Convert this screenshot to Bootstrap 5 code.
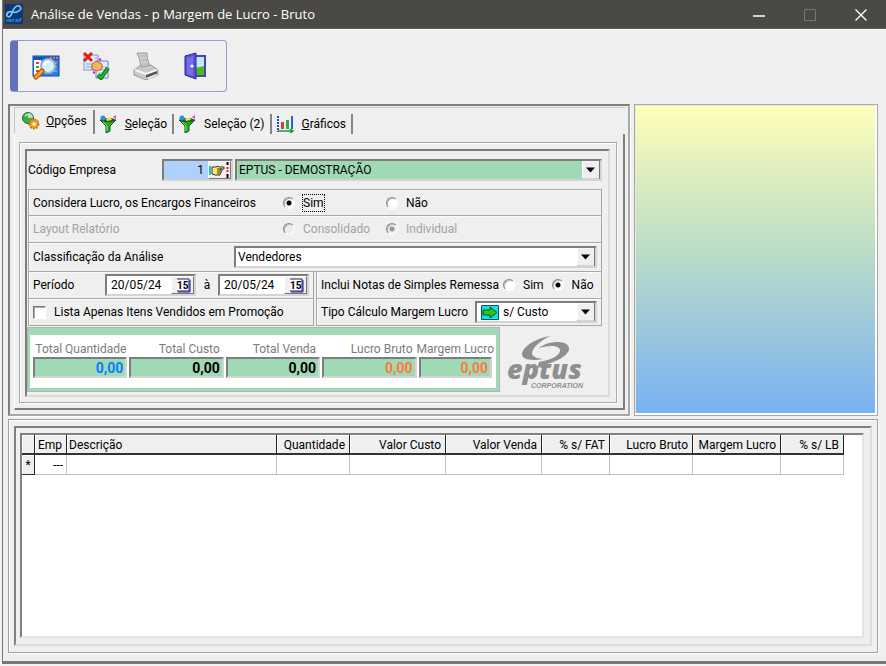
<!DOCTYPE html>
<html lang="pt-BR">
<head>
<meta charset="utf-8">
<meta name="viewport" content="width=device-width, initial-scale=1">
<title>Análise de Vendas - p Margem de Lucro - Bruto</title>
<link href="https://cdn.jsdelivr.net/npm/bootstrap@5.3.0/dist/css/bootstrap.min.css" rel="stylesheet">
<style>
:root{--face:#efefef;--dark:#7d7d7d;--mid:#a8a8a8;--green:#a0dab4}
body{background:#f2f2f2;font-family:Roboto,"Liberation Sans",sans-serif;font-size:12px;line-height:16px;color:#000}
button,input,select{font:inherit;color:inherit}
.win{margin-left:2px;background:var(--face);border-left:1px solid #777;border-bottom:3px solid #777;min-height:calc(100vh - 2px)}
.titlebar{background:#4b4946;color:#fff;height:29px;border-bottom:1px solid #5c5a58;font-family:"Open Sans",sans-serif;padding-left:2px}
.titlebar h1{font-size:13px;line-height:16px}
.winbtn{width:51px;height:28px;border:0;background:none;padding:0}
.toolwrap{padding:10px 0 12px 7px}
.toolbox{width:217px;height:52px;border:1px solid #8f9fd0;border-left:8px solid #6472b8;border-radius:4px;gap:22px;padding-left:14px}
.toolbox button{border:0;background:none;padding:0;width:28px;height:28px}
.content{padding:0 8px 8px 5px}
.toprow{display:grid;grid-template-columns:minmax(0,622fr) minmax(0,244fr);gap:4px}
.frame{border:2px solid;border-color:#7d7d7d #a8a8a8 #a8a8a8 #7d7d7d;box-shadow:1px 1px 0 #fff;padding:1px 3px 4px 4px}
.tabset{border:1px solid #c6c6c6;border-right:0;border-bottom:0;padding-top:2px;height:27px}
.tabbtn{border:0;border-right:2px solid #858585;background:none;height:20px;padding:0 5px 0 4px;gap:8px}
.tabbtn.current{height:24px;padding:0 6px 2px 7px;gap:6px}
.tabbody{border-left:1px solid #fff;border-right:2px solid var(--dark);border-bottom:2px solid var(--dark);padding:8px 6px 5px 4px}
.page{border:1px solid var(--mid);box-shadow:inset 1px 1px 0 #fff,1px 1px 0 #fff;padding:6px 6px 5px 5px}
.well{border:2px solid;border-color:var(--dark) #dcdcdc #dcdcdc var(--dark);padding:0 6px 4px 1px}
.sunk{border:2px solid;border-color:var(--dark) #d4d4d4 #d4d4d4 var(--dark);background:#fff}
.raised{border:1px solid;border-color:#fff #777 #777 #fff;background:var(--face);padding:0}
.sunk input,.sunk select{border:0;background:none;padding:0;min-width:0;outline:0}
.tinted{background:var(--green)}
.box{border:1px solid var(--mid);box-shadow:inset 1px 1px 0 #fafafa;padding:0 4px}
.r26{height:27px}.r28{height:29px}
.lab1{width:250px}.opt1{width:103px}
.lab-cls{width:201px}.lab-per{width:72px}.lab-rem{width:182px}.lab-tp{width:154px}
.lab1,.lab-cls,.lab-per,.lab-rem,.lab-tp{flex:none}
.split{gap:2px}
.off{color:#a3a3a3}
.rd{appearance:none;width:12px;height:12px;border-radius:50%;border:1px solid;border-color:#888 #fff #fff #888;background:#fff;margin:0;box-shadow:inset 1px 1px 0 #bbb;flex:none}
.rd:checked{background:radial-gradient(circle,#000 2px,#fff 3px)}
.rd:disabled{background:#eee}
.rd:disabled:checked{background:radial-gradient(circle,#999 2px,#eee 3px)}
.ck{appearance:none;width:13px;height:13px;border:1px solid;border-color:#777 #fff #fff #777;box-shadow:inset 1px 1px 0 #aaa;background:#fff;margin:0}
.focusbox{outline:1px dotted #000}
.sunk .dd{appearance:none;width:100%;height:100%;border-radius:0;background:url("data:image/svg+xml,%3Csvg xmlns='http://www.w3.org/2000/svg' width='18' height='19'%3E%3Crect width='18' height='19' fill='%23777'/%3E%3Crect width='17' height='18' fill='%23fff'/%3E%3Crect x='1' y='1' width='16' height='17' fill='%23efefef'/%3E%3Cpath d='M4 7h9l-4.500 5z'/%3E%3C/svg%3E") right center no-repeat}
.sunk .ps{padding-left:2px}
.h22{height:22px}
.emp{width:71px}.lab-emp{width:132px}
.emp-row{gap:2px}
.emp input{background:#afd0fa;width:43px;text-align:right}
.emp-row{padding:8px 0}
.datebox{width:91px;flex:none}
.datebox button{width:23px}
.sumrow{padding-top:2px}
.sums{border:3px solid var(--green);border-top-width:7px;border-left-width:2px;outline:1px solid #b4b4b4;background:#fff;width:471px;height:63px;color:#7c7c7c;padding:6px 4px 0 3px;gap:2px}
.sums>div{flex:1 1 95px;min-width:0}
.sums label{display:flex;justify-content:flex-end;white-space:nowrap;padding-right:4px}
.sums .first label{padding-right:1px}
.sums .sunk{background:var(--green);width:100%;height:21px;text-align:right;font-weight:700;font-size:14px;padding:0 2px 0 0;display:block;border-radius:0}
.sums .slim{flex-basis:74px}
.sums .slim label{justify-content:center;padding:0}
.blue{color:#0080ff}.orange{color:#ff7840}.black{color:#000}
.sky{background:linear-gradient(#ffffb8,#b9dbc7 48%,#79b2f4);border:1px solid #a8a8a8;box-shadow:inset -2px -2px 0 #fff,inset 1px 1px 0 #e8e8d8}
.lower{border:1px solid #a0a0a0;box-shadow:inset 1px 1px 0 #fff,1px 1px 0 #fff;padding:6px 5px 6px 5px;margin-top:3px}
.lower .midframe{border:2px solid;border-color:#808080 #dedede #dedede #808080;padding:5px 6px 6px 4px}
.gridbox{border:2px solid;border-color:#808080 #e4e4e4 #e4e4e4 #808080;background:#fff;overflow:hidden}
.grid{table-layout:fixed;width:822px;border-collapse:separate;border-spacing:0}
.grid th{font-weight:400;background:var(--face);height:20px;border-right:1px solid #222;border-bottom:2px solid #333;box-shadow:inset 1px 1px 0 #fff;padding:1px 4px 0 2px;white-space:nowrap;text-align:right}
.grid td{height:20px;border-right:1px solid #c0c0c0;border-bottom:1px solid #c0c0c0;padding:0 3px;text-align:right}
.grid tbody th{border-bottom:1px solid #333;padding:0;text-align:center}
</style>
<script src="https://cdn.jsdelivr.net/npm/bootstrap@5.3.0/dist/js/bootstrap.bundle.min.js"></script>
</head>
<body>
<main class="win d-flex flex-column">
<header class="titlebar d-flex align-items-center">
 <svg width="18" height="20" viewBox="0 0 18 20" aria-hidden="true"><rect width="18" height="20" fill="#0b3a73"/><path d="M2 12C1 8 5 7 8 8s5 0 7-2 0-5-3-4-4 4-5 7-3 5-5 3z" fill="none" stroke="#7cc4f5" stroke-width="1.700"/><path d="M2 15v3m2 0v-3l2 3v-3m2 0v3m0-3h1m2 0v3m0-3l2 3v-3m2 0v3m-1-3h3" stroke="#3d8fd6" fill="none"/></svg>
 <h1 class="m-0 ms-1 ps-1 fw-normal flex-grow-1">Análise de Vendas - p Margem de Lucro - Bruto</h1>
 <button class="winbtn" aria-label="Minimizar"><svg width="12" height="12"><path d="M0 7h12" stroke="#fff" stroke-width="1.5"/></svg></button>
 <button class="winbtn" aria-label="Maximizar" disabled><svg width="12" height="12"><path d="M.5.5h11v11H.5z" fill="none" stroke="#777"/></svg></button>
 <button class="winbtn" aria-label="Fechar"><svg width="12" height="12"><path d="M.5.5l11 11m0-11l-11 11" stroke="#fff" stroke-width="1.4"/></svg></button>
</header>
<div class="d-flex flex-column flex-grow-1 border-top border-white">
<div class="toolwrap"><div class="toolbox d-flex align-items-center" role="toolbar">
 <button aria-label="Pesquisar"><svg width="28" height="28" viewBox="0 0 28 28"><rect x="1" y="4" width="26" height="20" fill="#2a7fe0" stroke="#144a9c"/><path d="M1 5h26v3H1z" fill="#1455b8"/><path d="M18 6h2m1 0h2m1 0h2" stroke="#e66" stroke-width="2"/><path d="M2 8h7v16H2z" fill="#fff"/><path d="M4 11h3m-3 8h3" stroke="#e33" stroke-width="2"/><path d="M4 15h3" stroke="#2a4" stroke-width="2"/><path d="M17 11h8m-8 4h8m-8 4h8" stroke="#8fd0ff"/><circle cx="16" cy="14" r="7" fill="#d5f2fc" stroke="#9cb4c4" stroke-width="2"/><path d="M12 13c1-3 3-4 5-3" stroke="#fff" stroke-width="2" fill="none"/><path d="M10 19l-6 6" stroke="#a65008" stroke-width="5" stroke-linecap="round"/><path d="M10 19l-6 6" stroke="#ff9d2c" stroke-width="3" stroke-linecap="round"/></svg></button>
 <button aria-label="Selecionar"><svg width="28" height="28" viewBox="0 0 28 28"><path d="M2 3h14v15H2z" fill="#deecfa" stroke="#6f98cf"/><path d="M4 12h9m-9 3h9m0-9h2" stroke="#79a7dc"/><path d="M14 9h12v17H14z" fill="#e4effc" stroke="#5f83c8"/><path d="M16 15h8m-8 3h8m-8 3h8" stroke="#8ab3e4"/><path d="M10 12l4-3 6 3v5l-5 2-5-2z" fill="#f3b468" stroke="#b46c1c"/><path d="M17 7l2 1m-8 12l2 1" stroke="#f0f" stroke-width="2"/><path d="M2 1l8 8m0-8l-8 8" stroke="#e0200c" stroke-width="3"/><path d="M16 23l3 3 7-10" fill="none" stroke="#0b6c10" stroke-width="4"/><path d="M16 23l3 3 7-10" fill="none" stroke="#24b82e" stroke-width="2"/></svg></button>
 <button aria-label="Imprimir"><svg width="28" height="28" viewBox="0 0 28 28"><path d="M5 1h10c0 5 1 8 3 13l-9 2C8 10 8 7 5 1z" fill="#cfcfcf" stroke="#9a9a9a"/><path d="M8 4h6m-5 4h6m-5 4h6" stroke="#aaa"/><path d="M2 18l7-5 1 2 9-2 7 5v5l-12 5-12-5z" fill="#c9c9c9" stroke="#999"/><path d="M3 18l11 4 11-4" fill="none" stroke="#f6f6f6" stroke-width="2"/><path d="M14 23l11-4v3l-11 4z" fill="#555"/><path d="M14 26l10-4 2 1-9 4z" fill="#e8e8e8"/></svg></button>
 <button aria-label="Sair"><svg width="28" height="28" viewBox="0 0 28 28"><path d="M11 3h13v22H11z" fill="#4a42b8"/><path d="M13 5h9v18h-9z" fill="#bdeafc"/><path d="M13 16l9-2v9h-9z" fill="#4cba1c"/><path d="M3 4l11-3v26L3 23z" fill="#5b54d6" stroke="#2c2690"/><path d="M5 6l6-2v20l-6-2z" fill="#756ee8"/><circle cx="10" cy="14" r="1.5" fill="#fff"/></svg></button>
</div></div>
<div class="content d-flex flex-column flex-grow-1">
<div class="toprow">
<section class="frame">
 <div class="tabset d-flex align-items-start" role="tablist">
  <button class="tabbtn current d-flex align-items-center" role="tab" aria-selected="true"><svg width="18" height="18" viewBox="0 0 18 18"><circle cx="6" cy="6" r="5.5" fill="#3cae3c" stroke="#1c6c2c"/><path d="M6 6V1a5 5 0 0 1 5 5z" fill="#c7d6c7"/><path d="M3 4l3-2" stroke="#a6f0a0" stroke-width="2"/><circle cx="12" cy="12" r="4.5" fill="#f2a928" stroke="#c07a14" stroke-width="2" stroke-dasharray="2 1"/><circle cx="12" cy="12" r="1.5" fill="#fff"/></svg><span><u>O</u>pções</span></button>
  <button class="tabbtn d-flex align-items-center mt-1" role="tab"><svg width="18" height="18" viewBox="0 0 18 18"><path d="M1 5h16l-6 6v5l-4 2v-7z" fill="#27a82d" stroke="#0d5c18"/><path d="M4 7l4 4v5" stroke="#8eea6e" fill="none"/><ellipse cx="9" cy="5" rx="7" ry="2" fill="#145c1c"/><circle cx="4" cy="3" r="2.500" fill="#2e8ee6"/><path d="M7 4l4-2 2 3-5 1z" fill="#ffe135"/><path d="M14 2l3-2v4z" fill="#f031e0"/></svg><span><u>S</u>eleção</span></button>
  <button class="tabbtn d-flex align-items-center mt-1" role="tab"><svg width="18" height="18" viewBox="0 0 18 18"><path d="M1 5h16l-6 6v5l-4 2v-7z" fill="#27a82d" stroke="#0d5c18"/><path d="M4 7l4 4v5" stroke="#8eea6e" fill="none"/><ellipse cx="9" cy="5" rx="7" ry="2" fill="#145c1c"/><circle cx="4" cy="3" r="2.500" fill="#2e8ee6"/><path d="M7 4l4-2 2 3-5 1z" fill="#ffe135"/><path d="M14 2l3-2v4z" fill="#f031e0"/></svg><span>Seleção (2)</span></button>
  <button class="tabbtn d-flex align-items-center mt-1" role="tab"><svg width="18" height="18" viewBox="0 0 18 18"><path d="M2 1v16" stroke="#1f4fc4" stroke-width="2" stroke-dasharray="2 1"/><path d="M2 16h14m-2-2l3 2-3 2" stroke="#20983c" stroke-width="1.5" fill="none"/><path d="M5 7h3v7H5z" fill="#e8382c"/><path d="M10 5h3v9h-3z" fill="#35a845"/><path d="M15 1h2v13h-2z" fill="#2466c8"/></svg><span><u>G</u>ráficos</span></button>
 </div>
 <div class="tabbody"><div class="page"><form class="well" onsubmit="return false">
  <div class="d-flex align-items-center emp-row">
   <label class="lab-emp" for="emp">Código Empresa</label>
   <div class="sunk emp h22 d-flex"><input id="emp" value="1" class="flex-grow-1 pe-1"><button class="raised" aria-label="Localizar empresa"><svg width="21" height="16" viewBox="0 0 21 16" class="d-block"><path d="M1 4v9" stroke="#19c8d4" stroke-width="2"/><path d="M3 5h4l2-1 1 1h5v2h-4l2 1v1l-1 1v1l-1 1v1H6l-3-1z" fill="#ffe864" stroke="#333"/><path d="M8 7h4m-4 2h4m-4 2h3" stroke="#333"/><path d="M18.500 0v3m0 9v4" stroke="#000" stroke-width="2"/><path d="M18.500 5v5" stroke="#e22" stroke-width="2" stroke-dasharray="2 1"/></svg></button></div>
   <div class="sunk tinted h22 flex-grow-1"><select class="dd ps" aria-label="Empresa" id="empname"><option>EPTUS - DEMOSTRAÇÃO</option></select></div>
  </div>
  <div class="box r26 d-flex align-items-center"><span class="lab1">Considera Lucro, os Encargos Financeiros</span>
   <div class="opt1 d-flex align-items-center gap-2"><input type="radio" class="rd" name="luc" id="l1" checked><label for="l1" class="focusbox">Sim</label></div>
   <div class="d-flex align-items-center gap-2"><input type="radio" class="rd" name="luc" id="l2"><label for="l2">Não</label></div></div>
  <div class="box r26 border-top-0 d-flex align-items-center off"><span class="lab1">Layout Relatório</span>
   <div class="opt1 d-flex align-items-center gap-2"><input type="radio" class="rd" name="lay" id="y1" disabled><label for="y1">Consolidado</label></div>
   <div class="d-flex align-items-center gap-2"><input type="radio" class="rd" name="lay" id="y2" disabled checked><label for="y2">Individual</label></div></div>
  <div class="box r28 border-top-0 d-flex align-items-center"><label for="cls" class="lab-cls">Classificação da Análise</label>
   <div class="sunk h22 flex-grow-1"><select class="dd ps" id="cls"><option>Vendedores</option></select></div></div>
  <div class="d-flex split">
   <div class="w-50"><div class="box r26 border-top-0 d-flex align-items-center pe-1"><label for="d1" class="lab-per">Período</label>
     <div class="sunk h22 datebox d-flex"><input id="d1" value="20/05/24" class="flex-grow-1 w-25 ps-1"><button class="raised" aria-label="Calendário inicial"><svg width="19" height="16" viewBox="0 0 19 16" class="d-block mx-auto"><path d="M4 2h12v12H4" fill="#fff" stroke="#1a1a80" stroke-width="1"/><path d="M17 3v12H5" fill="none" stroke="#1a1a80"/><text x="4" y="12" font-size="10" font-weight="700">15</text></svg></button></div>
     <label for="d2" class="text-center flex-grow-1">à</label>
     <div class="sunk h22 datebox d-flex"><input id="d2" value="20/05/24" class="flex-grow-1 w-25 ps-1"><button class="raised" aria-label="Calendário final"><svg width="19" height="16" viewBox="0 0 19 16" class="d-block mx-auto"><path d="M4 2h12v12H4" fill="#fff" stroke="#1a1a80" stroke-width="1"/><path d="M17 3v12H5" fill="none" stroke="#1a1a80"/><text x="4" y="12" font-size="10" font-weight="700">15</text></svg></button></div></div>
    <div class="box r26 border-top-0 d-flex align-items-center gap-2"><input type="checkbox" class="ck" id="ck"><label for="ck">Lista Apenas Itens Vendidos em Promoção</label></div></div>
   <div class="w-50"><div class="box r26 border-top-0 d-flex align-items-center"><span class="lab-rem">Inclui Notas de Simples Remessa</span>
     <input type="radio" class="rd me-2" name="rem" id="r1"><label for="r1" class="me-2">Sim</label><input type="radio" class="rd me-2" name="rem" id="r2" checked><label for="r2">Não</label></div>
    <div class="box r26 border-top-0 d-flex align-items-center"><label for="tp" class="lab-tp">Tipo Cálculo Margem Lucro</label>
     <div class="sunk h22 flex-grow-1 d-flex align-items-center ps-1"><svg width="18" height="15" viewBox="0 0 18 15" class="flex-shrink-0 me-1"><path d="M.5.500h17v14H.5z" fill="#19e0e8" stroke="#056"/><path d="M2 5h7V2l7 5.500L9 13v-3H2z" fill="#28c81e" stroke="#0b500c"/></svg><select class="dd" id="tp"><option>s/ Custo</option></select></div></div></div>
  </div>
  <div class="d-flex align-items-start sumrow">
   <div class="sums d-flex">
    <div class="first"><label for="s1">Total Quantidade</label><input id="s1" class="sunk blue" value="0,00" readonly></div>
    <div><label for="s2">Total Custo</label><input id="s2" class="sunk black" value="0,00" readonly></div>
    <div><label for="s3">Total Venda</label><input id="s3" class="sunk black" value="0,00" readonly></div>
    <div><label for="s4">Lucro Bruto</label><input id="s4" class="sunk orange" value="0,00" readonly></div>
    <div class="slim"><label for="s5">Margem Lucro</label><input id="s5" class="sunk orange" value="0,00" readonly></div>
   </div>
   <svg class="ms-2 mt-2" width="84" height="54" viewBox="0 0 84 54" fill="#8f8f8f"><path d="M43 0C30 2 16 10 15 18c0 6 10 7 21 5-9-1-13-4-10-9C29 8 37 3 43 0z"/><path d="M32 12c10-8 29-8 30 0 1 7-14 15-27 17l-5 4 2-7c14-2 22-8 21-12-1-5-11-5-21-2z"/><text x="0" y="43" font-family="Open Sans,sans-serif" font-weight="800" font-style="italic" font-size="27">eptus</text><text x="24" y="52" font-family="Liberation Sans,sans-serif" font-weight="700" font-style="italic" font-size="7">CORPORATION</text></svg>
  </div>
 </form></div></div>
</section>
<aside class="sky"></aside>
</div>
<section class="lower flex-grow-1 d-flex flex-column">
 <div class="midframe flex-grow-1 d-flex flex-column"><div class="gridbox flex-grow-1">
 <table class="grid"><colgroup><col width="13"><col width="32"><col width="210"><col width="73"><col width="96"><col width="96"><col width="68"><col width="83"><col width="88"><col width="63"></colgroup>
 <thead><tr><th></th><th>Emp</th><th class="text-start">Descrição</th><th>Quantidade</th><th>Valor Custo</th><th>Valor Venda</th><th>% s/ FAT</th><th>Lucro Bruto</th><th>Margem Lucro</th><th>% s/ LB</th></tr></thead>
 <tbody><tr><th scope="row">*</th><td>---</td><td></td><td></td><td></td><td></td><td></td><td></td><td></td><td></td></tr></tbody></table>
 </div></div>
</section>
</div></div>
</main>
</body>
</html>
